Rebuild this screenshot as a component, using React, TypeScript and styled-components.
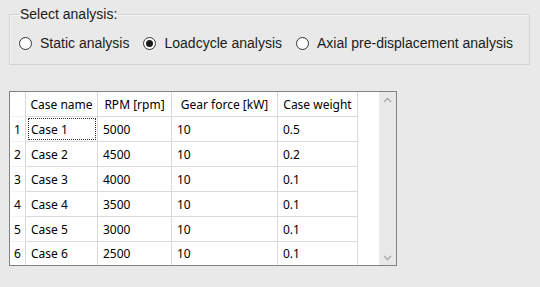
import React, { useState } from "react";
import styled, { createGlobalStyle } from "styled-components";

const GlobalStyle = createGlobalStyle`
  html, body {
    margin: 0;
    padding: 0;
    background: #e9e9e9;
  }
  body {
    width: 540px;
    height: 287px;
    overflow: hidden;
  }
`;

const Page = styled.div`
  padding: 6px 10px 0 9px;
  font-family: "Liberation Sans", Arial, sans-serif;
  color: #1b1b1b;
`;

const GroupBox = styled.fieldset`
  margin: 0;
  padding: 13px 8px 13px 9px;
  border: 1px solid #d2d2d2;
  box-shadow: inset 1px 1px 0 #f6f6f6;
`;

const Legend = styled.legend`
  padding: 0 1px;
  margin-left: 0;
  font-size: 14px;
  line-height: 16px;
`;

const RadioRow = styled.div`
  display: flex;
  align-items: center;
  gap: 14px;
`;

const RadioOption = styled.label`
  display: flex;
  align-items: center;
  gap: 8px;
  font-size: 14px;
  line-height: 16px;
  cursor: default;
`;

const RadioCircle = styled.span<{ checked: boolean }>`
  box-sizing: border-box;
  width: 13px;
  height: 13px;
  border-radius: 50%;
  border: 1px solid #333;
  background: #fff;
  display: flex;
  align-items: center;
  justify-content: center;
  &::after {
    content: "";
    width: 7px;
    height: 7px;
    border-radius: 50%;
    background: ${(p) => (p.checked ? "#1a1a1a" : "transparent")};
  }
`;

const TableFrame = styled.div`
  margin-top: 26px;
  width: 388px;
  box-sizing: border-box;
  border: 1px solid #828282;
  background: #fff;
  display: flex;
  font-family: "Noto Sans", "Open Sans", sans-serif;
  font-size: 12px;
  color: #000;
`;

const Grid = styled.div`
  flex: 1;
  display: grid;
  grid-template-columns: 16px 72px 74px 106px 80px 1fr;
  grid-template-rows: 24px repeat(5, 25px) 24px;
`;

const HeadCell = styled.div<{ blank?: boolean }>`
  display: flex;
  align-items: center;
  justify-content: center;
  border-right: ${(p) => (p.blank ? "none" : "1px solid #dadada")};
  white-space: nowrap;
`;

const RowNum = styled.div`
  display: flex;
  align-items: center;
  justify-content: center;
  border-right: 1px solid #dadada;
  border-top: 1px solid #f1f1f1;
`;

const Cell = styled.div<{ focused?: boolean }>`
  position: relative;
  display: flex;
  align-items: center;
  padding-left: 5px;
  border-right: 1px solid #dadada;
  border-top: 1px solid #dadada;
  white-space: nowrap;
  &::before {
    content: "";
    display: ${(p) => (p.focused ? "block" : "none")};
    position: absolute;
    left: 2px;
    right: 1px;
    top: 1px;
    bottom: 1px;
    border: 1px dotted #333;
  }
`;

const Filler = styled.div`
  background: #fff;
`;

const ScrollBar = styled.div`
  width: 17px;
  background: #e8e8e8;
  display: flex;
  flex-direction: column;
  justify-content: space-between;
  align-items: center;
  padding: 5px 0 4px;
`;

const Arrow = ({ up }: { up?: boolean }) => (
  <svg width="9" height="6" viewBox="0 0 9 6">
    <path
      d={up ? "M1 5 L4.5 1.5 L8 5" : "M1 1 L4.5 4.5 L8 1"}
      fill="none"
      stroke="#a6a6a6"
      strokeWidth="1.3"
    />
  </svg>
);

const cases = [
  { name: "Case 1", rpm: 5000, force: 10, weight: "0.5" },
  { name: "Case 2", rpm: 4500, force: 10, weight: "0.2" },
  { name: "Case 3", rpm: 4000, force: 10, weight: "0.1" },
  { name: "Case 4", rpm: 3500, force: 10, weight: "0.1" },
  { name: "Case 5", rpm: 3000, force: 10, weight: "0.1" },
  { name: "Case 6", rpm: 2500, force: 10, weight: "0.1" },
];

const options = [
  "Static analysis",
  "Loadcycle analysis",
  "Axial pre-displacement analysis",
];

export default function App() {
  const [selected, setSelected] = useState(1);
  return (
    <Page>
      <GlobalStyle />
      <GroupBox>
        <Legend>Select analysis:</Legend>
        <RadioRow>
          {options.map((o, i) => (
            <RadioOption key={o} onClick={() => setSelected(i)}>
              <RadioCircle checked={selected === i} />
              {o}
            </RadioOption>
          ))}
        </RadioRow>
      </GroupBox>
      <TableFrame>
        <Grid>
          <HeadCell />
          <HeadCell>Case name</HeadCell>
          <HeadCell>RPM [rpm]</HeadCell>
          <HeadCell>Gear force [kW]</HeadCell>
          <HeadCell>Case weight</HeadCell>
          <HeadCell blank />
          {cases.map((c, i) => (
            <React.Fragment key={c.name}>
              <RowNum>{i + 1}</RowNum>
              <Cell focused={i === 0}>{c.name}</Cell>
              <Cell>{c.rpm}</Cell>
              <Cell>{c.force}</Cell>
              <Cell>{c.weight}</Cell>
              <Filler />
            </React.Fragment>
          ))}
        </Grid>
        <ScrollBar>
          <Arrow up />
          <Arrow />
        </ScrollBar>
      </TableFrame>
    </Page>
  );
}
